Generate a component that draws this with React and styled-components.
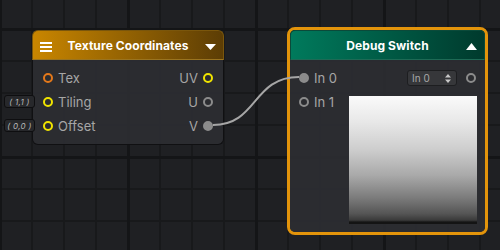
import React from 'react'
import styled, { createGlobalStyle } from 'styled-components'

const Global = createGlobalStyle`
  html, body { margin: 0; padding: 0; }
  body {
    width: 500px;
    height: 250px;
    overflow: hidden;
    font-family: Inter, "Noto Sans", sans-serif;
  }
`

const Canvas = styled.div`
  position: relative;
  width: 500px;
  height: 250px;
  overflow: hidden;
  background-color: #1f2023;
  background-image:
    linear-gradient(to right, #141517 0 3px, transparent 3px),
    linear-gradient(to bottom, #141517 0 3px, transparent 3px),
    linear-gradient(to right, #18191b 0 2px, transparent 2px),
    linear-gradient(to bottom, #18191b 0 2px, transparent 2px);
  background-size: 128px 128px, 128px 128px, 32px 32px, 32px 32px;
  background-position: -1px 0, 0 28px, -1px 0, 0 28px;
`

const Wires = styled.svg`
  position: absolute;
  left: 0;
  top: 0;
  pointer-events: none;
  z-index: 2;
`

const Node = styled.div`
  position: absolute;
  left: ${p => p.x}px;
  top: ${p => p.y}px;
  width: ${p => p.w}px;
  box-sizing: border-box;
  border-radius: 7px;
  ${p => p.selected ? `
    border: 3px solid #e3940b;
    border-radius: 8px;
  ` : ''}
  z-index: 1;
`

const Header = styled.div`
  height: 30px;
  box-sizing: border-box;
  display: flex;
  align-items: center;
  justify-content: center;
  position: relative;
  border-radius: ${p => p.selected ? '5px 5px 0 0' : '6px 6px 0 0'};
  background: ${p => p.tone === 'green'
    ? 'linear-gradient(to right, #007a5c, #003a2d)'
    : 'linear-gradient(to right, #c98600, #5c3d05)'};
  border: 1px solid ${p => p.tone === 'green' ? '#0b4a3a' : '#7a560c'};
  border-bottom-color: ${p => p.tone === 'green' ? '#1e6a55' : '#9a7420'};
  color: #fff;
  font-weight: 700;
  font-size: 12px;
  letter-spacing: 0.1px;
`

const Burger = styled.div`
  position: absolute;
  left: 7px;
  top: 11px;
  width: 12px;
  height: 10px;
  display: flex;
  flex-direction: column;
  justify-content: space-between;
  span {
    display: block;
    height: 2px;
    background: #fff;
  }
`

const Caret = styled.svg`
  position: absolute;
  right: 7px;
  top: ${p => p.up ? 12 : 13}px;
`

const Body = styled.div`
  background: rgba(44, 45, 49, 0.93);
  box-sizing: border-box;
  border: ${p => p.selected ? 'none' : '1px solid #101012'};
  border-top: none;
  border-radius: ${p => p.selected ? '0 0 5px 5px' : '0 0 6px 6px'};
  padding: 6px ${p => p.pr}px 6px ${p => p.pl}px;
  ${p => p.split ? `
    display: flex;
    justify-content: space-between;
    padding-bottom: 8px;
  ` : ''}
`

const Row = styled.div`
  height: 24px;
  display: flex;
  align-items: center;
  justify-content: space-between;
  position: relative;
`

const Side = styled.div`
  display: flex;
  align-items: center;
  gap: 5px;
  color: #a6a6a6;
  font-size: 13px;
`

const Port = styled.span`
  width: 10px;
  height: 10px;
  box-sizing: border-box;
  border-radius: 50%;
  border: 2px solid ${p => p.color};
  background: ${p => p.filled ? p.color : 'transparent'};
  flex: none;
`

const ValueBox = styled.div`
  position: absolute;
  left: -39px;
  top: 5px;
  width: 31px;
  height: 13px;
  box-sizing: border-box;
  background: #27282b;
  border: 1px solid #0e0e10;
  border-radius: 3px;
  color: #b8b8b8;
  font-size: 8px;
  font-style: italic;
  display: flex;
  align-items: center;
  justify-content: center;
  letter-spacing: 0.3px;
`

const Inputs = styled.div`
  display: flex;
  flex-direction: column;
`

const Right = styled.div`
  display: flex;
  flex-direction: column;
  align-items: flex-end;
`

const TopRow = styled.div`
  height: 24px;
  display: flex;
  align-items: center;
  gap: 9px;
  margin-right: 1px;
`

const Select = styled.div`
  width: 50px;
  height: 16px;
  box-sizing: border-box;
  background: #36373a;
  border: 1px solid #1d1e20;
  border-radius: 3px;
  display: flex;
  align-items: center;
  justify-content: space-between;
  padding: 0 5px 0 4px;
  color: #a8a8a8;
  font-size: 10px;
`

const Preview = styled.div`
  margin-top: 6px;
  width: 128px;
  height: 128px;
  background: linear-gradient(to bottom,
    #fafafa 0%, #e8e8e8 20%, #cdcdcd 42%, #a9a9a9 62%,
    #7a7a7a 80%, #555 92%, #3a3a3a 97%, #141414 98.5%, #141414 100%);
`

const GREY = '#8c8c8c'
const YELLOW = '#f0e400'
const ORANGE = '#e3781a'

export default function App() {
  return (
    <Canvas>
      <Global />

      <Node x={32} y={30} w={192}>
        <Header tone="orange">
          <Burger><span /><span /><span /></Burger>
          Texture Coordinates
          <Caret width="11" height="6" viewBox="0 0 11 6">
            <path d="M0 0 L11 0 L5.5 6 Z" fill="#fff" />
          </Caret>
        </Header>
        <Body pl={10} pr={10}>
          <Row>
            <Side><Port color={ORANGE} />Tex</Side>
            <Side>UV<Port color={YELLOW} /></Side>
          </Row>
          <Row>
            <ValueBox>( 1,1 )</ValueBox>
            <Side><Port color={YELLOW} />Tiling</Side>
            <Side>U<Port color={GREY} /></Side>
          </Row>
          <Row>
            <ValueBox>( 0,0 )</ValueBox>
            <Side><Port color={YELLOW} />Offset</Side>
            <Side>V<Port color={GREY} filled /></Side>
          </Row>
        </Body>
      </Node>

      <Node x={287} y={27} w={201} selected>
        <Header tone="green" selected>
          Debug Switch
          <Caret up width="11" height="7" viewBox="0 0 11 7">
            <path d="M0 7 L11 7 L5.5 0 Z" fill="#fff" />
          </Caret>
        </Header>
        <Body selected split pl={9} pr={8}>
          <Inputs>
            <Row>
              <Side><Port color={GREY} filled />In 0</Side>
            </Row>
            <Row>
              <Side><Port color={GREY} />In 1</Side>
            </Row>
          </Inputs>
          <Right>
            <TopRow>
              <Select>
                In 0
                <svg width="6" height="9" viewBox="0 0 6 9">
                  <path d="M0 3.5 L6 3.5 L3 0 Z M0 5.5 L6 5.5 L3 9 Z" fill="#c8c8c8" />
                </svg>
              </Select>
              <Port color={GREY} />
            </TopRow>
            <Preview />
          </Right>
        </Body>
      </Node>

      <Wires width="500" height="250">
        <path d="M213 125 C 258 125, 252 77, 299 77" stroke="#a6a6a6" strokeWidth="2" fill="none" />
      </Wires>
    </Canvas>
  )
}
